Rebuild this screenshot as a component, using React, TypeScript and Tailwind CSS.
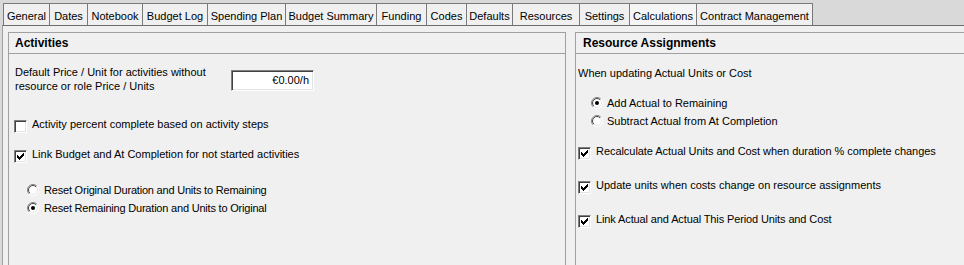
import React from "react";

const tabs: { label: string; w: string; selected?: boolean }[] = [
  { label: "General", w: "w-[47px] border-l" },
  { label: "Dates", w: "w-[38px]" },
  { label: "Notebook", w: "w-[55px]" },
  { label: "Budget Log", w: "w-[65px]" },
  { label: "Spending Plan", w: "w-[78px]" },
  { label: "Budget Summary", w: "w-[91px]" },
  { label: "Funding", w: "w-[50px]" },
  { label: "Codes", w: "w-[40px]" },
  { label: "Defaults", w: "w-[46px]" },
  { label: "Resources", w: "w-[67px]" },
  { label: "Settings", w: "w-[50px]" },
  { label: "Calculations", w: "w-[67px]", selected: true },
  { label: "Contract Management", w: "w-[116px]" },
];

const CHECK = [
  "......X",
  ".....XX",
  "X...XXX",
  "XX.XXX.",
  "XXXXX..",
  ".XXX...",
  "..X....",
];

function CheckMark() {
  const rects: React.ReactNode[] = [];
  CHECK.forEach((row, y) =>
    row.split("").forEach((c, x) => {
      if (c === "X") rects.push(<rect key={`${x}-${y}`} x={x} y={y} width={1} height={1} fill="#000" />);
    })
  );
  return (
    <svg width="7" height="7" viewBox="0 0 7 7" shapeRendering="crispEdges" className="block">
      {rects}
    </svg>
  );
}

function CheckBox({ checked }: { checked?: boolean }) {
  return (
    <div className="w-[13px] h-[13px] shrink-0 border border-t-[#808080] border-l-[#808080] border-b-white border-r-white bg-white shadow-[inset_1px_1px_0_#404040,inset_-1px_-1px_0_#e3e3e3] flex items-center justify-center">
      {checked ? <CheckMark /> : null}
    </div>
  );
}

function Radio({ checked, id }: { checked?: boolean; id: string }) {
  return (
    <svg width="12" height="12" viewBox="0 0 12 12" className="block shrink-0">
      <defs>
        <linearGradient id={`o${id}`} x1="0" y1="0" x2="1" y2="1">
          <stop offset="0.45" stopColor="#808080" />
          <stop offset="0.55" stopColor="#ffffff" />
        </linearGradient>
        <linearGradient id={`i${id}`} x1="0" y1="0" x2="1" y2="1">
          <stop offset="0.45" stopColor="#404040" />
          <stop offset="0.55" stopColor="#e3e3e3" />
        </linearGradient>
      </defs>
      <circle cx="6" cy="6" r="5.5" fill="#fff" stroke={`url(#o${id})`} strokeWidth="1" />
      <circle cx="6" cy="6" r="4.5" fill="#fff" stroke={`url(#i${id})`} strokeWidth="1" />
      {checked ? <circle cx="6" cy="6" r="2" fill="#000" /> : null}
    </svg>
  );
}

function CheckRow({ checked, label, className, track = "" }: { checked?: boolean; label: string; className: string; track?: string }) {
  return (
    <div className={`flex items-start h-[14px] ${className}`}>
      <div className="mt-[3px]">
        <CheckBox checked={checked} />
      </div>
      <span className={`ml-[5px] leading-[14px] whitespace-nowrap ${track}`}>{label}</span>
    </div>
  );
}

function RadioRow({ checked, label, className, id, gap, track = "" }: { checked?: boolean; label: string; className: string; id: string; gap: string; track?: string }) {
  return (
    <div className={`flex items-start h-[14px] ${className}`}>
      <div className="mt-[1px]">
        <Radio checked={checked} id={id} />
      </div>
      <span className={`${gap} leading-[14px] whitespace-nowrap ${track}`}>{label}</span>
    </div>
  );
}

export default function App() {
  return (
    <div
      className="w-[964px] h-[265px] overflow-hidden bg-[#d9d9d9] text-[11px] text-black flex flex-col"
      style={{ fontFamily: '"Liberation Sans", Arial, sans-serif' }}
    >
      <div className="flex pt-[3px] pl-[3px] h-[25px] shrink-0">
        {tabs.map((t) => (
          <div
            key={t.label}
            className={`${t.w} h-[22px] border-t border-r border-[#7a7a7a] ${
              t.selected ? "bg-[#f5f5f5]" : "bg-[#f0f0f0]"
            } text-center pt-[3px] leading-[18px] whitespace-nowrap`}
          >
            {t.label}
          </div>
        ))}
      </div>
      <div className="flex-1 ml-[2px] border-t border-t-[#6d6d6d] border-l border-l-[#a0a0a0] bg-[#f0f0f0] flex gap-[9px] pl-[5px] pt-[6px]">
        {/* Activities */}
        <div className="w-[558px] h-[300px] shrink-0 border border-[#a0a0a0]">
          <div className="h-[21px] border-b border-[#a0a0a0] pl-[6px] font-bold text-[12px] leading-[20px]">
            Activities
          </div>
          <div className="flex items-start mt-[11px] pl-[6px]">
            <div className="w-[216px] leading-[14px]">
              Default Price / Unit for activities without
              <br />
              resource or role Price / Units
            </div>
            <div className="mt-[5px] w-[83px] h-[21px] border border-t-[#808080] border-l-[#808080] border-b-white border-r-white bg-white shadow-[inset_1px_1px_0_#404040,inset_-1px_-1px_0_#e3e3e3] text-right pr-[4px] leading-[19px]">
              €0.00/h
            </div>
          </div>
          <CheckRow className="mt-[24px] pl-[5px]" label="Activity percent complete based on activity steps" />
          <CheckRow className="mt-[16px] pl-[5px]" checked label="Link Budget and At Completion for not started activities" />
          <RadioRow className="mt-[22px] pl-[18px]" gap="ml-[5px]" track="tracking-[-0.2px]" id="a" label="Reset Original Duration and Units to Remaining" />
          <RadioRow className="mt-[4px] pl-[18px]" gap="ml-[5px]" track="tracking-[-0.2px]" id="b" checked label="Reset Remaining Duration and Units to Original" />
        </div>
        {/* Resource Assignments */}
        <div className="w-[420px] h-[300px] shrink-0 border border-[#a0a0a0]">
          <div className="h-[21px] border-b border-[#a0a0a0] pl-[7px] font-bold text-[12px] leading-[20px]">
            Resource Assignments
          </div>
          <div className="mt-[12px] pl-[2px] leading-[14px] whitespace-nowrap">When updating Actual Units or Cost</div>
          <RadioRow className="mt-[16px] pl-[15px]" gap="ml-[4px]" id="c" checked label="Add Actual to Remaining" />
          <RadioRow className="mt-[4px] pl-[15px]" gap="ml-[4px]" id="d" label="Subtract Actual from At Completion" />
          <CheckRow className="mt-[16px] pl-[2px]" track="tracking-[-0.05px]" checked label="Recalculate Actual Units and Cost when duration % complete changes" />
          <CheckRow className="mt-[20px] pl-[2px]" checked label="Update units when costs change on resource assignments" />
          <CheckRow className="mt-[20px] pl-[2px]" track="tracking-[-0.12px]" checked label="Link Actual and Actual This Period Units and Cost" />
        </div>
      </div>
    </div>
  );
}
